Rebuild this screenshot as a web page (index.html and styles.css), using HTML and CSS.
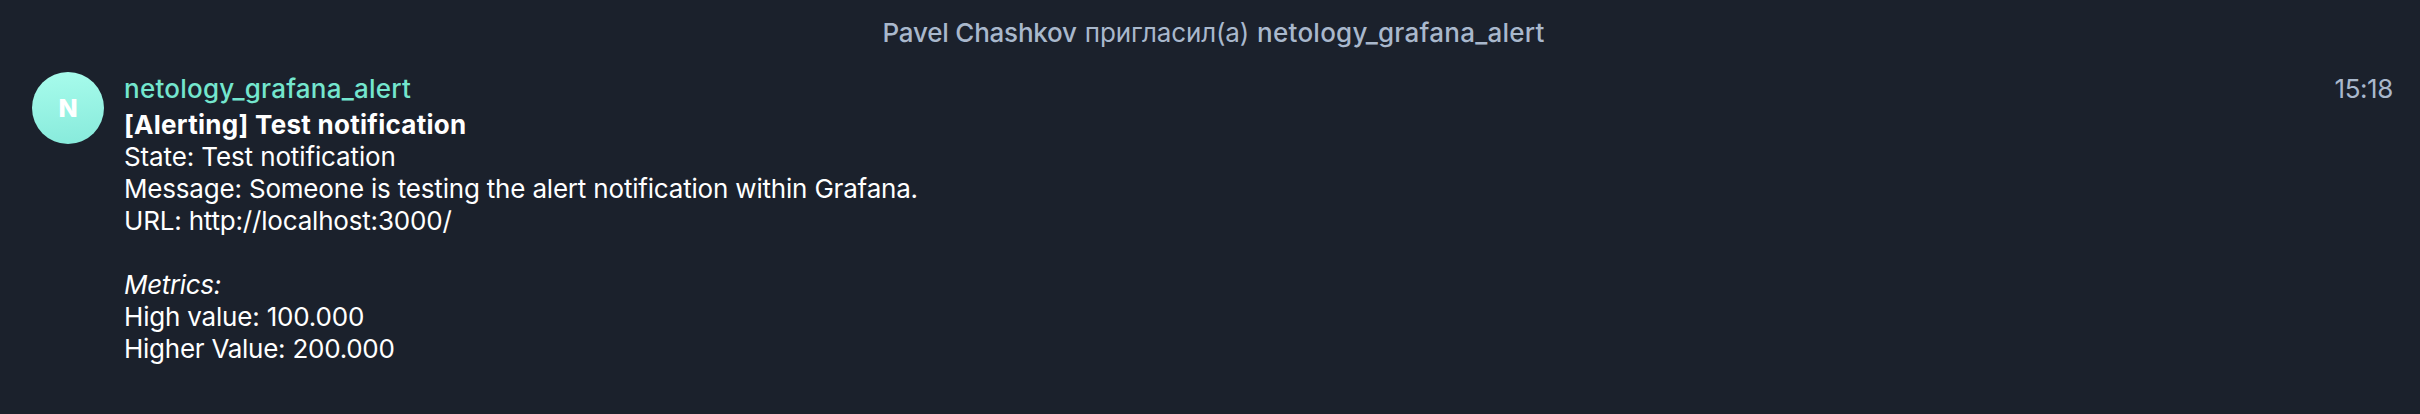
FILE: index.html
```html
<!DOCTYPE html>
<html lang="ru">
<head>
<meta charset="utf-8">
<title>netology_grafana_alert</title>
<link rel="stylesheet" href="styles.css">
</head>
<body>
<main class="chat">
  <p class="service"><b class="inviter">Pavel Chashkov</b><span class="action">пригласил(а)</span><b class="invited">netology_grafana_alert</b></p>
  <article class="message">
    <div class="avatar">N</div>
    <div class="body">
      <div class="author">netology_grafana_alert</div>
      <div class="line title">[Alerting] Test notification</div>
      <div class="line state">State: Test notification</div>
      <div class="line">Message: Someone is testing the alert notification within Grafana.</div>
      <div class="line">URL: http://localhost:3000/</div>
      <div class="line"></div>
      <div class="line metrics"><em>Metrics:</em></div>
      <div class="line">High value: 100.000</div>
      <div class="line higher">Higher Value: 200.000</div>
    </div>
    <time class="time">15:18</time>
  </article>
</main>
</body>
</html>
```
FILE: styles.css
```css
body {
  margin: 0;
  background: #1b212c;
  color: #fff;
  font-family: Inter, "Noto Sans", sans-serif;
  font-size: 26px;
}
.chat {
  height: 414px;
  overflow: hidden;
}
.service {
  display: flex;
  gap: 8px;
  margin: 0;
  padding: 16px 0 0 882.5px;
  height: 34px;
  line-height: 34px;
  color: #a9b8cc;
  white-space: nowrap;
}
.service b { font-weight: 500; }
.inviter { letter-spacing: -0.22px; }
.action { letter-spacing: -0.16px; }
.invited { letter-spacing: 0.26px; }
.message {
  display: flex;
  padding: 22px 27px 0 32px;
}
.avatar {
  width: 72px;
  height: 72px;
  border-radius: 50%;
  background: linear-gradient(175deg, #a8fcec, #87eadb);
  font-size: 25px;
  font-weight: 800;
  line-height: 72px;
  text-align: center;
}
.body {
  flex: 1;
  margin-left: 20px;
  white-space: nowrap;
}
.author {
  height: 37px;
  line-height: 34px;
  font-weight: 500;
  letter-spacing: 0.24px;
  color: #74e6ce;
}
.line {
  height: 32px;
  line-height: 32px;
  letter-spacing: -0.19px;
}
.title {
  font-weight: 700;
  letter-spacing: 0.28px;
}
.state { letter-spacing: -0.12px; }
.metrics { letter-spacing: -0.35px; }
.higher { letter-spacing: -0.26px; }
.time {
  line-height: 34px;
  letter-spacing: -0.4px;
  color: #a9b8cc;
}
```
